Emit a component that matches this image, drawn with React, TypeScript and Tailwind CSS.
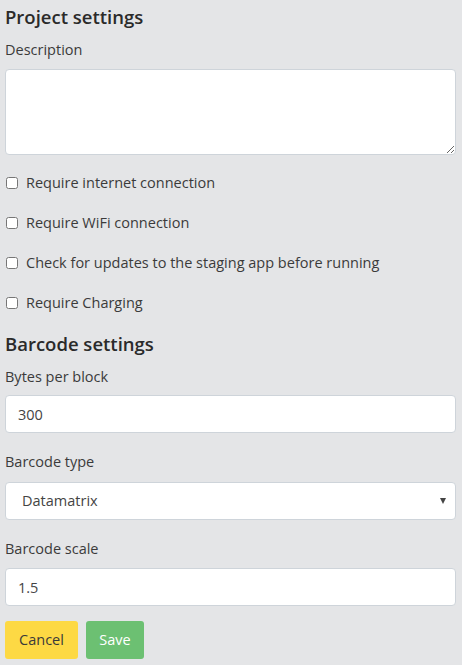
import { useState } from 'react'

const font = { fontFamily: '"Open Sans", "Noto Sans", sans-serif' }

function Check({ label }: { label: string }) {
  const [on, setOn] = useState(false)
  return (
    <label className="flex items-center h-[40px] text-[14.5px] text-[#3b3b3b] cursor-pointer">
      <input
        type="checkbox"
        checked={on}
        onChange={() => setOn(!on)}
        className="m-0 w-[12px] h-[12px] ml-[1px] mr-[8px] accent-gray-500"
      />
      {label}
    </label>
  )
}

export default function App() {
  const [desc, setDesc] = useState('')
  const [bytes, setBytes] = useState('300')
  const [type, setType] = useState('Datamatrix')
  const [scale, setScale] = useState('1.5')

  const inputCls =
    'block w-full h-[38px] bg-white border border-[#ced4da] rounded-[4px] px-[12px] text-[14.5px] text-[#444] outline-none'

  return (
    <div className="min-h-screen bg-[#e4e5e7] pl-[5px] pr-[6px] pt-[3px]" style={font}>
      <h2 className="text-[18.5px] font-semibold text-[#2a2a2a] leading-[28px]">Project settings</h2>
      <div className="mt-[9px] text-[14.5px] text-[#3b3b3b] leading-[20px]">Description</div>
      <textarea
        value={desc}
        onChange={(e) => setDesc(e.target.value)}
        className="block w-full h-[86px] mt-[9px] bg-white border border-[#ced4da] rounded-[4px] px-[12px] py-[6px] text-[14.5px] outline-none"
      />

      <div className="mt-[8px]">
        <Check label="Require internet connection" />
        <Check label="Require WiFi connection" />
        <Check label="Check for updates to the staging app before running" />
        <Check label="Require Charging" />
      </div>

      <h2 className="mt-[7px] text-[18.5px] font-semibold text-[#2a2a2a] leading-[28px]">Barcode settings</h2>
      <div className="mt-[9px] text-[14.5px] text-[#3b3b3b] leading-[20px]">Bytes per block</div>
      <input value={bytes} onChange={(e) => setBytes(e.target.value)} className={`${inputCls} mt-[8px]`} />

      <div className="mt-[19px] text-[14.5px] text-[#3b3b3b] leading-[20px]">Barcode type</div>
      <div className="relative mt-[10px]">
        <select
          value={type}
          onChange={(e) => setType(e.target.value)}
          className={`${inputCls} appearance-none pl-[16px]`}
        >
          <option>Datamatrix</option>
          <option>QR</option>
          <option>PDF417</option>
        </select>
        <span className="pointer-events-none absolute right-[10px] top-[16px] w-0 h-0 border-l-[3.5px] border-r-[3.5px] border-t-[6px] border-l-transparent border-r-transparent border-t-[#444]" />
      </div>

      <div className="mt-[19px] text-[14.5px] text-[#3b3b3b] leading-[20px]">Barcode scale</div>
      <input value={scale} onChange={(e) => setScale(e.target.value)} className={`${inputCls} mt-[9px]`} />

      <div className="flex gap-[8px] mt-[15px]">
        <button className="h-[38px] w-[73px] rounded-[3px] bg-[#fdd944] text-[#3a3a3a] text-[14.5px]">Cancel</button>
        <button className="h-[38px] w-[58px] rounded-[3px] bg-[#6cc072] text-white text-[14.5px]">Save</button>
      </div>
    </div>
  )
}
